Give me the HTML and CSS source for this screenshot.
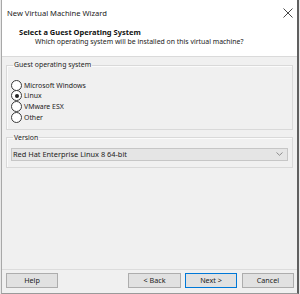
FILE: index.html
```html
<!DOCTYPE html>
<html>
<head>
<meta charset="utf-8">
<link rel="stylesheet" href="styles.css">
</head>
<body>
<div class="window">
  <div class="titlebar">
    <span class="title">New Virtual Machine Wizard</span>
    <svg class="close" width="10" height="10" viewBox="0 0 10 10"><path d="M0.5 0.5 L9.5 9.5 M9.5 0.5 L0.5 9.5" stroke="#333" stroke-width="0.9" fill="none"/></svg>
  </div>
  <div class="header">
    <div class="heading">Select a Guest Operating System</div>
    <div class="subheading">Which operating system will be installed on this virtual machine?</div>
  </div>
  <div class="content">
    <fieldset class="group group-os">
      <legend>Guest operating system</legend>
      <div class="radio-row"><span class="radio"></span><span>Microsoft Windows</span></div>
      <div class="radio-row"><span class="radio checked"></span><span>Linux</span></div>
      <div class="radio-row"><span class="radio"></span><span>VMware ESX</span></div>
      <div class="radio-row"><span class="radio"></span><span>Other</span></div>
    </fieldset>
    <fieldset class="group group-version">
      <legend>Version</legend>
      <div class="select">
        <span>Red Hat Enterprise Linux 8 64-bit</span>
        <svg class="chevron" width="7" height="4" viewBox="0 0 7 4"><path d="M0.5 0.5 L3.5 3.3 L6.5 0.5" stroke="#777" stroke-width="0.8" fill="none"/></svg>
      </div>
    </fieldset>
  </div>
  <div class="footer">
    <button class="btn">Help</button>
    <div class="spacer"></div>
    <button class="btn btn-back">&lt; Back</button>
    <button class="btn btn-next">Next &gt;</button>
    <button class="btn btn-cancel">Cancel</button>
  </div>
</div>
</body>
</html>
```
FILE: styles.css
```css
html, body {
  margin: 0;
  padding: 0;
  background: #e8e8e8;
}
body {
  width: 300px;
  height: 294px;
  overflow: hidden;
  font-family: "Noto Sans", "Open Sans", sans-serif;
  font-size: 6.9px;
  color: #1a1a1a;
}
.window {
  margin-left: 1px;
  width: 295px;
  height: 293px;
  border-left: 1px solid #a8a8a8;
  border-right: 2px solid #5f5f5f;
  border-bottom: 1px solid #9a9a9a;
  background: #f0f0f0;
  display: flex;
  flex-direction: column;
}
.titlebar {
  height: 22px;
  background: #fff;
  display: flex;
  align-items: center;
  padding-left: 5px;
  padding-right: 4px;
  padding-top: 3px;
  box-sizing: border-box;
}
.title {
  flex: 1;
  font-size: 7.6px;
  color: #222;
}
.close {
  display: block;
}
.header {
  height: 35px;
  background: #fff;
  border-bottom: 1px solid #dadada;
  padding-top: 5px;
  box-sizing: border-box;
}
.heading {
  font-weight: bold;
  font-size: 7.5px;
  padding-left: 17px;
  line-height: 10px;
  color: #111;
}
.subheading {
  padding-left: 33px;
  line-height: 10px;
  color: #222;
}
.content {
  flex: 1;
  padding: 3px 4px 0 4px;
  display: flex;
  flex-direction: column;
  gap: 3px;
}
.group {
  margin: 0;
  border: 1px solid #d9d9d9;
  box-shadow: inset 1px 1px 0 #fbfbfb;
  padding: 10px 4px 6px 4px;
}
.group legend {
  padding: 0 1px;
  margin-left: 2px;
  line-height: 10px;
  color: #222;
}
.radio-row {
  height: 10.67px;
  display: flex;
  align-items: center;
  gap: 2px;
}
.radio {
  width: 9px;
  height: 9px;
  border: 1px solid #3a3a3a;
  border-radius: 50%;
  background: #fff;
  display: flex;
  align-items: center;
  justify-content: center;
  flex-shrink: 0;
}
.radio.checked::after {
  content: "";
  width: 4px;
  height: 4px;
  border-radius: 50%;
  background: #222;
}
.group-version {
  padding-top: 5px;
  padding-bottom: 6px;
}
.select {
  height: 13px;
  box-sizing: border-box;
  border: 1px solid #c6c6c6;
  background: #e5e5e5;
  display: flex;
  align-items: center;
  justify-content: space-between;
  padding: 0 4px 0 1px;
  color: #222;
  font-size: 7.4px;
}
.chevron {
  display: block;
}
.footer {
  height: 24px;
  border-top: 1px solid #dcdcdc;
  box-sizing: border-box;
  display: flex;
  align-items: flex-start;
  padding: 3px 3px 0 4px;
  gap: 4px;
}
.spacer {
  flex: 1;
}
.btn {
  width: 52px;
  height: 15px;
  margin: 0;
  padding: 0;
  border: 1px solid #adadad;
  background: #e1e1e1;
  font-family: inherit;
  font-size: 7.2px;
  color: #222;
  line-height: 13px;
}
.btn-back {
  width: 53px;
}
.btn-next {
  border-color: #0078d7;
}
.btn-cancel {
  margin-left: 1px;
}
```
